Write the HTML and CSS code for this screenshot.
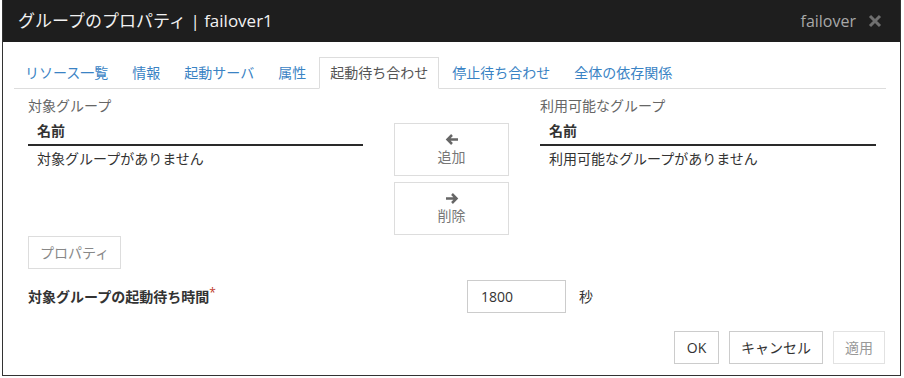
FILE: index.html
```html
<!DOCTYPE html>
<html lang="ja">
<head>
<meta charset="utf-8">
<title>グループのプロパティ</title>
<link rel="stylesheet" href="styles.css">
</head>
<body>
<div class="dialog">
  <div class="header">
    <div class="title">グループのプロパティ | failover1</div>
    <div class="header-right">
      <span class="server">failover</span>
      <svg class="close" width="14" height="14" viewBox="0 0 14 14"><path d="M2 2L12 12M12 2L2 12" stroke="#6f6f6f" stroke-width="3" fill="none"/></svg>
    </div>
  </div>
  <div class="body">
    <ul class="tabs">
      <li class="tab">リソース一覧</li>
      <li class="tab">情報</li>
      <li class="tab">起動サーバ</li>
      <li class="tab">属性</li>
      <li class="tab active">起動待ち合わせ</li>
      <li class="tab">停止待ち合わせ</li>
      <li class="tab">全体の依存関係</li>
    </ul>
    <div class="pane">
      <div class="lists">
        <div class="list">
          <div class="list-label">対象グループ</div>
          <div class="list-head">名前</div>
          <div class="list-row">対象グループがありません</div>
        </div>
        <div class="moves">
          <div class="move-btn">
            <svg width="14" height="13" viewBox="0 0 14 13"><path d="M13 6.5H2.5M7 2L2.5 6.5L7 11" stroke="#666" stroke-width="2.5" fill="none"/></svg>
            <span>追加</span>
          </div>
          <div class="move-btn">
            <svg width="14" height="13" viewBox="0 0 14 13"><path d="M1 6.5H11.5M7 2L11.5 6.5L7 11" stroke="#666" stroke-width="2.5" fill="none"/></svg>
            <span>削除</span>
          </div>
        </div>
        <div class="list">
          <div class="list-label">利用可能なグループ</div>
          <div class="list-head">名前</div>
          <div class="list-row">利用可能なグループがありません</div>
        </div>
      </div>
      <div class="prop-row"><div class="btn btn-muted">プロパティ</div></div>
      <div class="field">
        <div class="field-label">対象グループの起動待ち時間<sup class="req">*</sup></div>
        <div class="input">1800</div>
        <div class="unit">秒</div>
      </div>
      <div class="footer">
        <div class="btn btn-ok">OK</div>
        <div class="btn">キャンセル</div>
        <div class="btn btn-disabled">適用</div>
      </div>
    </div>
  </div>
</div>
</body>
</html>
```
FILE: styles.css
```css
* { box-sizing: border-box; }
html, body { margin: 0; padding: 0; background: #fff; }
body {
  font-family: "Open Sans", "Noto Sans CJK JP", "Noto Sans", sans-serif;
  font-size: 14px;
  color: #333;
}
.dialog {
  margin-left: 2px;
  width: 899px;
  height: 376px;
  border: 1px solid #333;
  border-top: none;
  background: #fff;
}
.header {
  height: 42px;
  background: #1e1e1e;
  display: flex;
  align-items: center;
  justify-content: space-between;
  padding: 0 18px 0 15px;
}
.title {
  color: #f2f2f2;
  font-size: 17px;
  line-height: 22px;
}
.header-right {
  display: flex;
  align-items: center;
  gap: 12px;
}
.server {
  color: #a8a8a8;
  font-size: 16px;
  line-height: 22px;
}
.close { display: block; }
.body {
  padding: 15px 14px 0 11px;
}
.tabs {
  list-style: none;
  margin: 0;
  padding: 0;
  display: flex;
  border-bottom: 1px solid #ddd;
  height: 32px;
}
.tab {
  padding: 5px 10px 5px;
  line-height: 20px;
  height: 31px;
  margin-right: 2px;
  border: 1px solid transparent;
  color: #3a83c4;
  white-space: nowrap;
}
.tab.active {
  color: #555;
  background: #fff;
  border-color: #ddd;
  border-bottom-color: #fff;
  height: 32px;
}
.pane {
  padding: 0 10px 0 14px;
}
.lists {
  display: grid;
  grid-template-columns: 335px 115px 336px;
  column-gap: 31px;
  margin-top: 7px;
}
.list-label {
  color: #666;
  line-height: 20px;
}
.list-head {
  font-weight: bold;
  padding: 5px 9px 3px;
  line-height: 20px;
  border-bottom: 2px solid #2a2a2a;
}
.list-row {
  padding: 3px 9px;
  line-height: 20px;
}
.moves {
  display: flex;
  flex-direction: column;
  gap: 6px;
  padding-top: 27px;
}
.move-btn {
  height: 53px;
  border: 1px solid #ddd;
  display: flex;
  flex-direction: column;
  align-items: center;
  justify-content: center;
  color: #777;
  gap: 1px;
}
.move-btn svg { display: block; }
.move-btn span { line-height: 20px; }
.prop-row {
  display: flex;
  margin-top: 1px;
}
.btn {
  height: 33px;
  padding: 0 11px;
  border: 1px solid #ccc;
  display: flex;
  align-items: center;
  justify-content: center;
  line-height: 20px;
  color: #333;
  white-space: nowrap;
}
.btn-ok { min-width: 45px; }
.btn-muted {
  color: #888;
  border-color: #ddd;
}
.btn-disabled {
  color: #999;
  border-color: #e2e2e2;
}
.field {
  display: flex;
  align-items: center;
  margin-top: 11px;
}
.field-label {
  width: 439px;
  font-weight: bold;
  line-height: 20px;
}
.req {
  color: #c0392b;
  font-weight: normal;
  font-size: 12px;
  vertical-align: top;
  position: relative;
  top: -4px;
}
.input {
  width: 99px;
  height: 33px;
  border: 1px solid #ccc;
  padding: 0 13px;
  display: flex;
  align-items: center;
  line-height: 20px;
}
.unit {
  margin-left: 13px;
  line-height: 20px;
}
.footer {
  display: flex;
  justify-content: flex-end;
  gap: 10px;
  margin-top: 18px;
  margin-right: -9px;
}
```
